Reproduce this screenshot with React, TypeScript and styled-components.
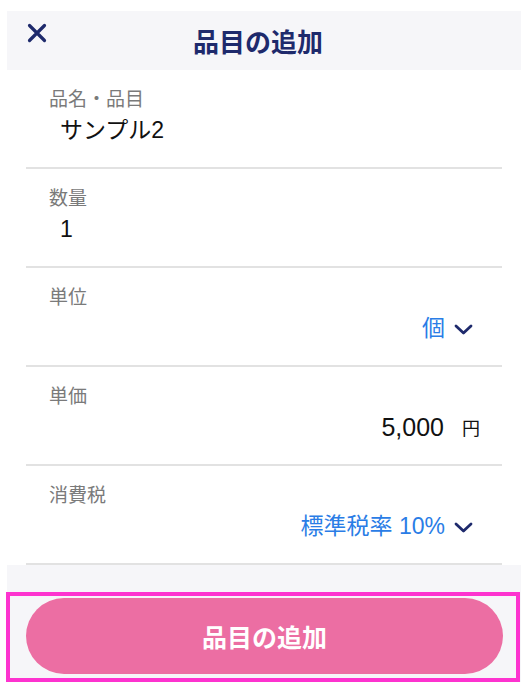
import React from "react";
import styled, { createGlobalStyle } from "styled-components";

const GlobalStyle = createGlobalStyle`
  body {
    margin: 0;
    background: #ffffff;
    font-family: "Liberation Sans", "Noto Sans CJK JP", sans-serif;
  }
`;

const Page = styled.div`
  padding: 11px 0 0 7px;
`;

const Panel = styled.div`
  width: 514px;
  display: flex;
  flex-direction: column;
`;

const Header = styled.div`
  height: 59px;
  background: #f6f6f9;
  display: flex;
  align-items: center;
  padding: 0 12px 0 20px;
  box-sizing: border-box;
`;

const CloseButton = styled.button`
  width: 20px;
  height: 20px;
  padding: 0;
  border: none;
  background: none;
  display: flex;
  align-self: flex-start;
  margin-top: 12px;
  cursor: pointer;
`;

const Title = styled.h1`
  flex: 1;
  margin: 0;
  text-align: center;
  font-family: "Noto Sans CJK JP", sans-serif;
  font-weight: 700;
  font-size: 26px;
  color: #1e2a6c;
  padding-right: 40px;
`;

const Body = styled.div`
  background: #ffffff;
  padding: 0 19px;
`;

const Row = styled.div`
  height: 97px;
  border-bottom: 2px solid #e2e2e2;
  display: flex;
  flex-direction: column;
`;

const Label = styled.div`
  margin-top: 16px;
  padding-left: 23px;
  height: 24px;
  line-height: 24px;
  font-family: "Noto Sans CJK JP", sans-serif;
  font-size: 19px;
  color: #7a7a7a;
`;

const Value = styled.div<{ $align?: "left" | "right"; $inset?: number }>`
  margin-top: 6px;
  height: 28px;
  line-height: 28px;
  display: flex;
  align-items: center;
  justify-content: ${({ $align }) => ($align === "right" ? "flex-end" : "flex-start")};
  padding: ${({ $align, $inset = 29 }) => ($align === "right" ? `0 ${$inset}px 0 0` : "0 0 0 34px")};
  font-size: 23px;
  color: #111111;
`;

const Selectable = styled.span`
  color: #2a7de6;
`;

const Price = styled.span`
  font-size: 25px;
`;

const Unit = styled.span`
  font-family: "Noto Sans CJK JP", sans-serif;
  font-size: 18px;
  margin-left: 18px;
  color: #111111;
`;

const Chevron = styled.svg`
  width: 19px;
  height: 11px;
  margin-left: 9px;
  margin-top: 2px;
`;

const Footer = styled.div`
  background: #f6f6f9;
  padding-top: 27px;
`;

const HighlightFrame = styled.div`
  margin-left: -1px;
  width: 514px;
  height: 90px;
  box-sizing: border-box;
  border: 4px solid #fd33cf;
  padding: 2px 13px 3px 16px;
  display: flex;
`;

const SubmitButton = styled.button`
  flex: 1;
  height: 76px;
  border: none;
  border-radius: 38px;
  background: #ec6ea3;
  color: #ffffff;
  font-family: "Noto Sans CJK JP", sans-serif;
  font-weight: 700;
  font-size: 25px;
  cursor: pointer;
`;

const ChevronDown = () => (
  <Chevron viewBox="0 0 19 11" fill="none">
    <path d="M2 2 L9.5 9 L17 2" stroke="#1e2a6c" strokeWidth="2.8" strokeLinecap="round" strokeLinejoin="round" />
  </Chevron>
);

const App = () => (
  <Page>
    <GlobalStyle />
    <Panel>
      <Header>
        <CloseButton aria-label="閉じる">
          <svg width="20" height="20" viewBox="0 0 20 20">
            <path d="M2.5 2.5 L17.5 17.5 M17.5 2.5 L2.5 17.5" stroke="#1e2a6c" strokeWidth="3.2" strokeLinecap="round" />
          </svg>
        </CloseButton>
        <Title>品目の追加</Title>
      </Header>
      <Body>
        <Row>
          <Label>品名・品目</Label>
          <Value>サンプル2</Value>
        </Row>
        <Row>
          <Label>数量</Label>
          <Value>1</Value>
        </Row>
        <Row>
          <Label>単位</Label>
          <Value $align="right">
            <Selectable>個</Selectable>
            <ChevronDown />
          </Value>
        </Row>
        <Row>
          <Label>単価</Label>
          <Value $align="right" $inset={22}>
            <Price>5,000</Price>
            <Unit>円</Unit>
          </Value>
        </Row>
        <Row>
          <Label>消費税</Label>
          <Value $align="right">
            <Selectable>標準税率 10%</Selectable>
            <ChevronDown />
          </Value>
        </Row>
      </Body>
      <Footer>
        <HighlightFrame>
          <SubmitButton>品目の追加</SubmitButton>
        </HighlightFrame>
      </Footer>
    </Panel>
  </Page>
);

export default App;
